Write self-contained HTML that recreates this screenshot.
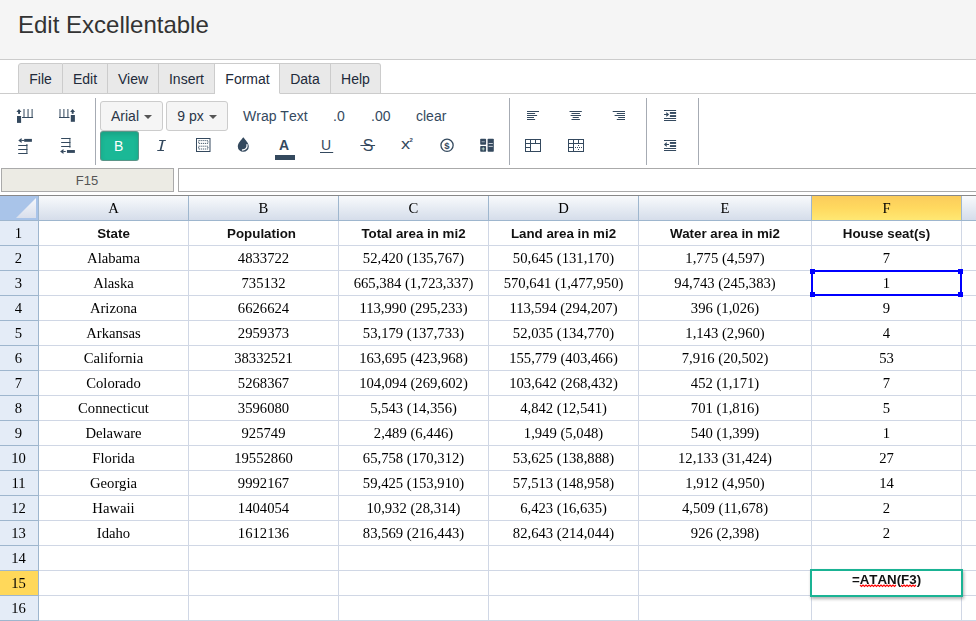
<!DOCTYPE html>
<html><head><meta charset="utf-8"><title>Edit Excellentable</title>
<style>
*{box-sizing:border-box;margin:0;padding:0}
html,body{width:976px;height:621px;overflow:hidden;background:#fff}
body{position:relative;font-family:"Liberation Sans",Arial,sans-serif;color:#333;font-size:14px}
#hdr{position:absolute;left:0;top:0;width:976px;height:60px;background:#f5f5f5;border-bottom:1px solid #ccc}
#hdr h1{position:absolute;left:18px;top:10px;font-size:24px;font-weight:normal;color:#333;line-height:30px;white-space:nowrap}
#tabs{position:absolute;left:18px;top:63px;height:31px;display:flex;z-index:2}
.tab{height:31px;border:1px solid #ccc;border-left:none;background:#e9e9e9;font-size:14px;line-height:31px;text-align:center;color:#222a3a}
.tab:first-child{border-left:1px solid #ccc;border-top-left-radius:3px}
.tab:last-child{border-top-right-radius:3px}
.tab.act{background:#fff;border-bottom-color:#fff}
#tabline{position:absolute;left:0;top:93px;width:976px;height:1px;background:#ccc}
#tbbot{position:absolute;left:0;top:168px;width:976px;height:1px;background:#aaa}
.vsep{position:absolute;top:98px;width:1px;height:67px;background:#a6abb3}
.btn{position:absolute;height:30px;border:1px solid #ccc;border-radius:3px;background:#f5f5f5;font-size:14px;line-height:28px;text-align:center;color:#2a3547}
.caret{display:inline-block;width:0;height:0;border-left:4px solid transparent;border-right:4px solid transparent;border-top:4px solid #555;vertical-align:middle;margin-left:5px;margin-top:0px;position:relative;top:-0.5px}
.tt{position:absolute;font-size:14px;line-height:16px;color:#34495e;white-space:nowrap;font-kerning:none}
.it{position:absolute;text-align:center;line-height:18px;color:#34495e;white-space:nowrap}
#bbtn{position:absolute;left:100px;top:131px;width:39px;height:30px;padding-right:1.5px;background:#1bb896;border:1px solid rgba(140,120,125,.55);box-shadow:inset 0 3px 5px rgba(0,0,0,.11);border-radius:3px;color:#fff;font-size:14px;line-height:28px;text-align:center}
#namebox{position:absolute;left:1px;top:168px;width:173px;height:24px;background:#ecebe4;border:1px solid #aaa;font-size:13px;line-height:23px;text-align:center;color:#555;padding-right:1px}
#fx{position:absolute;left:178px;top:168px;width:810px;height:24px;background:#fff;border:1px solid #aaa}
#gridtop{position:absolute;left:0;top:195px;width:976px;height:1px;background:#888}
#grid{position:absolute;left:0;top:0;width:976px;height:621px;font-family:"Liberation Serif","Times New Roman",serif;font-size:11pt;color:#000;will-change:transform}
.corner{position:absolute;left:0;top:196px;width:39px;height:25px;background:#a9c4e9;border-right:1px solid #9eb6ce;border-bottom:1px solid #9eb6ce}
.ch{position:absolute;top:196px;height:25px;background:linear-gradient(#f8fafc,#d5ddea);border-right:1px solid #9eb6ce;border-bottom:1px solid #9eb6ce;text-align:center;line-height:24px}
.ch.sel{background:linear-gradient(#fbcc5b,#ffd95f 50%,#ffe873)}
.rh{position:absolute;left:0;width:39px;padding-right:1px;height:25px;background:#e4ecf7;border-right:1px solid #9eb6ce;border-bottom:1px solid #9eb6ce;text-align:center;line-height:24px}
.rh.sel{background:#ffd85a}
.c{position:absolute;height:25px;border-right:1px solid #d0d7e5;border-bottom:1px solid #d0d7e5;text-align:center;line-height:25px;white-space:nowrap;overflow:hidden}
.c.b{font-family:"Liberation Sans",Arial,sans-serif;font-weight:bold;font-size:10pt;color:#111}
#selbox{position:absolute;left:811px;top:270px;width:151px;height:26px;border:2px solid #0000ff}
.h{position:absolute;width:5px;height:5px;background:#0000ff}
#editor{position:absolute;left:810px;top:569px;width:153px;height:28px;border:2px solid #1ab394;background:#fff;box-shadow:1px 2px 3px rgba(0,0,0,.3);font-family:"Liberation Sans",Arial,sans-serif;font-weight:bold;font-size:10pt;font-kerning:none;text-align:center;line-height:17px;color:#111}
</style></head><body>
<div id="hdr"><h1>Edit Excellentable</h1></div>
<div id="tabs">
<div class="tab" style="width:45px">File</div><div class="tab" style="width:45px">Edit</div><div class="tab" style="width:51px">View</div><div class="tab" style="width:56px">Insert</div><div class="tab act" style="width:65px;padding-left:1px">Format</div><div class="tab" style="width:51px">Data</div><div class="tab" style="width:50px">Help</div>
</div>
<div id="tabline"></div>
<div class="vsep" style="left:95px"></div>
<div class="vsep" style="left:509px"></div>
<div class="vsep" style="left:646px"></div>
<div class="vsep" style="left:698px"></div>
<div class="btn" style="left:100px;top:101px;width:63px">Arial<span class="caret"></span></div>
<div class="btn" style="left:166px;top:101px;width:62px">9 px<span class="caret"></span></div>
<div class="tt" style="left:243px;top:108px">Wrap Text</div>
<div class="tt" style="left:333px;top:108px">.0</div>
<div class="tt" style="left:371px;top:108px">.00</div>
<div class="tt" style="left:416px;top:108px">clear</div>
<div id="bbtn">B</div>
<svg width="976" height="621" style="position:absolute;left:0;top:0;pointer-events:none"><polygon points="18.96,108.90 16.40,112.00 21.50,112.00" fill="#34495e"/><rect x="18.10" y="111.80" width="1.90" height="2.10" fill="#34495e"/><rect x="17.00" y="116.00" width="4.10" height="6.90" fill="#34495e"/><rect x="23.50" y="109.00" width="1.00" height="8.50" fill="#34495e"/><rect x="27.55" y="109.00" width="1.00" height="8.50" fill="#34495e"/><rect x="31.60" y="109.00" width="1.00" height="8.50" fill="#34495e"/><rect x="22.05" y="117.00" width="11.02" height="1.00" fill="#34495e"/><rect x="59.50" y="109.00" width="1.00" height="8.50" fill="#34495e"/><rect x="63.40" y="109.00" width="1.00" height="8.50" fill="#34495e"/><rect x="67.40" y="109.00" width="1.00" height="8.50" fill="#34495e"/><rect x="59.00" y="117.00" width="10.50" height="1.00" fill="#34495e"/><polygon points="72.60,108.90 70.10,112.00 75.10,112.00" fill="#34495e"/><rect x="71.70" y="111.80" width="1.90" height="2.00" fill="#34495e"/><rect x="70.80" y="115.00" width="4.10" height="6.80" fill="#34495e"/><polygon points="18.30,140.45 21.60,138.00 21.60,142.90" fill="#34495e"/><rect x="21.30" y="139.95" width="3.20" height="1.00" fill="#34495e"/><rect x="24.20" y="138.90" width="7.70" height="2.90" fill="#34495e"/><rect x="18.20" y="145.00" width="9.20" height="1.00" fill="#34495e"/><rect x="18.20" y="149.00" width="9.20" height="1.00" fill="#34495e"/><rect x="18.20" y="153.00" width="9.20" height="1.00" fill="#34495e"/><rect x="26.40" y="144.05" width="1.00" height="9.95" fill="#34495e"/><rect x="61.15" y="138.00" width="9.25" height="1.00" fill="#34495e"/><rect x="61.15" y="142.00" width="9.25" height="1.00" fill="#34495e"/><rect x="61.15" y="146.00" width="9.25" height="1.00" fill="#34495e"/><rect x="69.40" y="137.90" width="1.00" height="9.80" fill="#34495e"/><polygon points="60.10,151.50 63.50,149.00 63.50,154.00" fill="#34495e"/><rect x="63.30" y="151.00" width="2.40" height="1.00" fill="#34495e"/><rect x="66.95" y="150.04" width="7.95" height="2.86" fill="#34495e"/><polygon points="159.20,140.00 165.90,140.00 165.80,141.00 159.10,141.00" fill="#34495e"/><polygon points="157.30,150.00 164.00,150.00 163.90,151.00 157.20,151.00" fill="#34495e"/><polygon points="162.00,140.50 163.70,140.50 161.30,150.50 159.60,150.50" fill="#34495e"/><rect x="196.5" y="138.5" width="13.5" height="13" fill="none" stroke="#34495e" stroke-width="1"/><rect x="198.6" y="140.6" width="9.3" height="2.8" fill="none" stroke="#34495e" stroke-width="0.9" stroke-dasharray="1.2 0.8"/><rect x="198.6" y="146.2" width="9.3" height="2.8" fill="none" stroke="#34495e" stroke-width="0.9" stroke-dasharray="1.2 0.8"/><path d="M243.3,137.3 C245.5,140.2 248.8,143.2 248.8,146.4 A5.5,5.4 0 0 1 237.8,146.4 C237.8,143.2 241.10000000000002,140.2 243.3,137.3 Z" fill="#34495e"/><path d="M247.0,144.6 C247.5,147.6 245.70000000000002,149.9 242.5,150.0" fill="none" stroke="#fff" stroke-width="1.3" stroke-linecap="round"/><rect x="275.00" y="155.00" width="20.00" height="5.00" fill="#34495e"/><rect x="320.00" y="152.00" width="13.20" height="1.00" fill="#34495e"/><rect x="360.40" y="145.00" width="14.70" height="1.00" fill="#34495e"/><circle cx="447.05" cy="145.3" r="6.1" fill="none" stroke="#34495e" stroke-width="1.3"/><rect x="480.2" y="138.8" width="5.9" height="6.0" rx="0.8" fill="#34495e"/><rect x="480.2" y="146.0" width="5.9" height="5.8" rx="0.8" fill="#34495e"/><rect x="487.6" y="138.8" width="6.2" height="13.0" rx="0.8" fill="#34495e"/><rect x="481.60" y="141.40" width="3.20" height="0.80" fill="#b9c2cc"/><rect x="481.60" y="148.50" width="3.20" height="0.80" fill="#c9e6d4"/><rect x="482.80" y="147.30" width="0.80" height="3.20" fill="#c9e6d4"/><rect x="488.60" y="143.00" width="4.20" height="0.80" fill="#e8ecf0"/><rect x="488.60" y="145.90" width="4.20" height="0.80" fill="#e8ecf0"/><rect x="527.00" y="111.00" width="12.00" height="1.00" fill="#34495e"/><rect x="527.00" y="113.00" width="8.10" height="1.00" fill="#34495e"/><rect x="527.00" y="115.00" width="10.10" height="1.00" fill="#34495e"/><rect x="527.00" y="117.00" width="7.00" height="1.00" fill="#34495e"/><rect x="527.00" y="119.00" width="8.10" height="1.00" fill="#34495e"/><rect x="569.50" y="111.00" width="12.30" height="1.00" fill="#34495e"/><rect x="571.50" y="113.00" width="8.40" height="1.00" fill="#34495e"/><rect x="570.60" y="115.00" width="10.40" height="1.00" fill="#34495e"/><rect x="572.70" y="117.00" width="6.10" height="1.00" fill="#34495e"/><rect x="571.50" y="119.00" width="8.40" height="1.00" fill="#34495e"/><rect x="612.70" y="111.00" width="12.30" height="1.00" fill="#34495e"/><rect x="616.80" y="113.00" width="8.20" height="1.00" fill="#34495e"/><rect x="614.60" y="115.00" width="10.40" height="1.00" fill="#34495e"/><rect x="618.20" y="117.00" width="6.80" height="1.00" fill="#34495e"/><rect x="616.80" y="119.00" width="8.20" height="1.00" fill="#34495e"/><rect x="525.5" y="139.5" width="15" height="12" fill="none" stroke="#34495e" stroke-width="1"/><rect x="530.00" y="139.50" width="1.00" height="12.00" fill="#34495e"/><rect x="535.00" y="139.50" width="1.00" height="4.00" fill="#34495e"/><rect x="525.50" y="143.00" width="15.00" height="1.00" fill="#34495e"/><rect x="525.50" y="147.00" width="5.00" height="1.00" fill="#34495e"/><rect x="568.5" y="139.5" width="15" height="12" fill="none" stroke="#34495e" stroke-width="1"/><rect x="573.00" y="139.50" width="1.00" height="12.00" fill="#34495e"/><rect x="578.00" y="139.50" width="1.00" height="4.00" fill="#34495e"/><rect x="568.50" y="143.00" width="15.00" height="1.00" fill="#34495e"/><rect x="568.50" y="147.00" width="5.00" height="1.00" fill="#34495e"/><rect x="575.00" y="147.00" width="1.00" height="1.00" fill="#34495e"/><rect x="577.00" y="147.00" width="1.00" height="1.00" fill="#34495e"/><rect x="579.00" y="147.00" width="1.00" height="1.00" fill="#34495e"/><rect x="581.00" y="147.00" width="1.00" height="1.00" fill="#34495e"/><rect x="578.00" y="145.00" width="1.00" height="1.00" fill="#34495e"/><rect x="578.00" y="149.00" width="1.00" height="1.00" fill="#34495e"/><rect x="664.00" y="110.00" width="12.10" height="1.00" fill="#34495e"/><rect x="669.90" y="112.00" width="6.20" height="1.90" fill="#34495e"/><rect x="669.90" y="115.10" width="6.20" height="1.90" fill="#34495e"/><rect x="664.00" y="118.00" width="12.10" height="1.00" fill="#34495e"/><rect x="664.00" y="120.00" width="12.10" height="1.00" fill="#34495e"/><rect x="664.00" y="114.00" width="3.50" height="1.00" fill="#34495e"/><polygon points="669.10,114.50 666.30,112.10 666.30,116.90" fill="#34495e"/><rect x="664.00" y="140.00" width="12.10" height="1.00" fill="#34495e"/><rect x="669.90" y="142.00" width="6.20" height="1.90" fill="#34495e"/><rect x="669.90" y="145.10" width="6.20" height="1.90" fill="#34495e"/><rect x="664.00" y="148.00" width="12.10" height="1.00" fill="#34495e"/><rect x="664.00" y="150.00" width="12.10" height="1.00" fill="#34495e"/><rect x="665.50" y="144.00" width="3.50" height="1.00" fill="#34495e"/><polygon points="663.90,144.50 666.70,142.10 666.70,146.90" fill="#34495e"/></svg>
<div class="it" style="left:274px;top:135.5px;width:20px;font-weight:bold;font-size:14px">A</div>
<div class="it" style="left:316px;top:136px;width:20px;font-size:14px">U</div>
<div class="it" style="left:358px;top:137px;width:20px;font-size:16px">S</div>
<div class="it" style="left:396px;top:135px;width:10px;font-size:14px;text-align:left;padding-left:0;transform:translateX(5px) scaleX(1.3);transform-origin:0 0">x</div><div class="it" style="left:409.5px;top:130.5px;width:5px;font-size:6px;font-weight:bold;text-align:left">2</div>
<div class="it" style="left:437px;top:136.5px;width:20px;font-size:9.5px;font-weight:bold">$</div>

<div id="namebox">F15</div>
<div id="fx"></div>
<div id="gridtop"></div>
<div id="grid">
<div class="corner"><svg width="38" height="24" style="position:absolute;left:0;top:0"><defs><linearGradient id="cg" x1="0" y1="0" x2="0" y2="1"><stop offset="0" stop-color="#f4f7fb"/><stop offset="1" stop-color="#d9dfec"/></linearGradient></defs><polygon points="36,2 36,22 16,22" fill="url(#cg)"/></svg></div>
<div class="ch" style="left:39px;width:150px">A</div>
<div class="ch" style="left:189px;width:150px">B</div>
<div class="ch" style="left:339px;width:150px">C</div>
<div class="ch" style="left:489px;width:150px">D</div>
<div class="ch" style="left:639px;width:173px">E</div>
<div class="ch sel" style="left:812px;width:150px">F</div>
<div class="ch" style="left:962px;width:150px">G</div>
<div class="rh" style="top:221px">1</div>
<div class="c b" style="left:39px;top:221px;width:150px">State</div>
<div class="c b" style="left:189px;top:221px;width:150px;padding-right:4px">Population</div>
<div class="c b" style="left:339px;top:221px;width:150px">Total area in mi2</div>
<div class="c b" style="left:489px;top:221px;width:150px">Land area in mi2</div>
<div class="c b" style="left:639px;top:221px;width:173px">Water area in mi2</div>
<div class="c b" style="left:812px;top:221px;width:150px">House seat(s)</div>
<div class="c b" style="left:962px;top:221px;width:150px"></div>
<div class="rh" style="top:246px">2</div>
<div class="c" style="left:39px;top:246px;width:150px">Alabama</div>
<div class="c" style="left:189px;top:246px;width:150px">4833722</div>
<div class="c" style="left:339px;top:246px;width:150px">52,420 (135,767)</div>
<div class="c" style="left:489px;top:246px;width:150px">50,645 (131,170)</div>
<div class="c" style="left:639px;top:246px;width:173px">1,775 (4,597)</div>
<div class="c" style="left:812px;top:246px;width:150px">7</div>
<div class="c" style="left:962px;top:246px;width:150px"></div>
<div class="rh" style="top:271px">3</div>
<div class="c" style="left:39px;top:271px;width:150px">Alaska</div>
<div class="c" style="left:189px;top:271px;width:150px">735132</div>
<div class="c" style="left:339px;top:271px;width:150px">665,384 (1,723,337)</div>
<div class="c" style="left:489px;top:271px;width:150px">570,641 (1,477,950)</div>
<div class="c" style="left:639px;top:271px;width:173px">94,743 (245,383)</div>
<div class="c" style="left:812px;top:271px;width:150px">1</div>
<div class="c" style="left:962px;top:271px;width:150px"></div>
<div class="rh" style="top:296px">4</div>
<div class="c" style="left:39px;top:296px;width:150px">Arizona</div>
<div class="c" style="left:189px;top:296px;width:150px">6626624</div>
<div class="c" style="left:339px;top:296px;width:150px">113,990 (295,233)</div>
<div class="c" style="left:489px;top:296px;width:150px">113,594 (294,207)</div>
<div class="c" style="left:639px;top:296px;width:173px">396 (1,026)</div>
<div class="c" style="left:812px;top:296px;width:150px">9</div>
<div class="c" style="left:962px;top:296px;width:150px"></div>
<div class="rh" style="top:321px">5</div>
<div class="c" style="left:39px;top:321px;width:150px">Arkansas</div>
<div class="c" style="left:189px;top:321px;width:150px">2959373</div>
<div class="c" style="left:339px;top:321px;width:150px">53,179 (137,733)</div>
<div class="c" style="left:489px;top:321px;width:150px">52,035 (134,770)</div>
<div class="c" style="left:639px;top:321px;width:173px">1,143 (2,960)</div>
<div class="c" style="left:812px;top:321px;width:150px">4</div>
<div class="c" style="left:962px;top:321px;width:150px"></div>
<div class="rh" style="top:346px">6</div>
<div class="c" style="left:39px;top:346px;width:150px">California</div>
<div class="c" style="left:189px;top:346px;width:150px">38332521</div>
<div class="c" style="left:339px;top:346px;width:150px">163,695 (423,968)</div>
<div class="c" style="left:489px;top:346px;width:150px">155,779 (403,466)</div>
<div class="c" style="left:639px;top:346px;width:173px">7,916 (20,502)</div>
<div class="c" style="left:812px;top:346px;width:150px">53</div>
<div class="c" style="left:962px;top:346px;width:150px"></div>
<div class="rh" style="top:371px">7</div>
<div class="c" style="left:39px;top:371px;width:150px">Colorado</div>
<div class="c" style="left:189px;top:371px;width:150px">5268367</div>
<div class="c" style="left:339px;top:371px;width:150px">104,094 (269,602)</div>
<div class="c" style="left:489px;top:371px;width:150px">103,642 (268,432)</div>
<div class="c" style="left:639px;top:371px;width:173px">452 (1,171)</div>
<div class="c" style="left:812px;top:371px;width:150px">7</div>
<div class="c" style="left:962px;top:371px;width:150px"></div>
<div class="rh" style="top:396px">8</div>
<div class="c" style="left:39px;top:396px;width:150px">Connecticut</div>
<div class="c" style="left:189px;top:396px;width:150px">3596080</div>
<div class="c" style="left:339px;top:396px;width:150px">5,543 (14,356)</div>
<div class="c" style="left:489px;top:396px;width:150px">4,842 (12,541)</div>
<div class="c" style="left:639px;top:396px;width:173px">701 (1,816)</div>
<div class="c" style="left:812px;top:396px;width:150px">5</div>
<div class="c" style="left:962px;top:396px;width:150px"></div>
<div class="rh" style="top:421px">9</div>
<div class="c" style="left:39px;top:421px;width:150px">Delaware</div>
<div class="c" style="left:189px;top:421px;width:150px">925749</div>
<div class="c" style="left:339px;top:421px;width:150px">2,489 (6,446)</div>
<div class="c" style="left:489px;top:421px;width:150px">1,949 (5,048)</div>
<div class="c" style="left:639px;top:421px;width:173px">540 (1,399)</div>
<div class="c" style="left:812px;top:421px;width:150px">1</div>
<div class="c" style="left:962px;top:421px;width:150px"></div>
<div class="rh" style="top:446px">10</div>
<div class="c" style="left:39px;top:446px;width:150px">Florida</div>
<div class="c" style="left:189px;top:446px;width:150px">19552860</div>
<div class="c" style="left:339px;top:446px;width:150px">65,758 (170,312)</div>
<div class="c" style="left:489px;top:446px;width:150px">53,625 (138,888)</div>
<div class="c" style="left:639px;top:446px;width:173px">12,133 (31,424)</div>
<div class="c" style="left:812px;top:446px;width:150px">27</div>
<div class="c" style="left:962px;top:446px;width:150px"></div>
<div class="rh" style="top:471px">11</div>
<div class="c" style="left:39px;top:471px;width:150px">Georgia</div>
<div class="c" style="left:189px;top:471px;width:150px">9992167</div>
<div class="c" style="left:339px;top:471px;width:150px">59,425 (153,910)</div>
<div class="c" style="left:489px;top:471px;width:150px">57,513 (148,958)</div>
<div class="c" style="left:639px;top:471px;width:173px">1,912 (4,950)</div>
<div class="c" style="left:812px;top:471px;width:150px">14</div>
<div class="c" style="left:962px;top:471px;width:150px"></div>
<div class="rh" style="top:496px">12</div>
<div class="c" style="left:39px;top:496px;width:150px">Hawaii</div>
<div class="c" style="left:189px;top:496px;width:150px">1404054</div>
<div class="c" style="left:339px;top:496px;width:150px">10,932 (28,314)</div>
<div class="c" style="left:489px;top:496px;width:150px">6,423 (16,635)</div>
<div class="c" style="left:639px;top:496px;width:173px">4,509 (11,678)</div>
<div class="c" style="left:812px;top:496px;width:150px">2</div>
<div class="c" style="left:962px;top:496px;width:150px"></div>
<div class="rh" style="top:521px">13</div>
<div class="c" style="left:39px;top:521px;width:150px">Idaho</div>
<div class="c" style="left:189px;top:521px;width:150px">1612136</div>
<div class="c" style="left:339px;top:521px;width:150px">83,569 (216,443)</div>
<div class="c" style="left:489px;top:521px;width:150px">82,643 (214,044)</div>
<div class="c" style="left:639px;top:521px;width:173px">926 (2,398)</div>
<div class="c" style="left:812px;top:521px;width:150px">2</div>
<div class="c" style="left:962px;top:521px;width:150px"></div>
<div class="rh" style="top:546px">14</div>
<div class="c" style="left:39px;top:546px;width:150px"></div>
<div class="c" style="left:189px;top:546px;width:150px"></div>
<div class="c" style="left:339px;top:546px;width:150px"></div>
<div class="c" style="left:489px;top:546px;width:150px"></div>
<div class="c" style="left:639px;top:546px;width:173px"></div>
<div class="c" style="left:812px;top:546px;width:150px"></div>
<div class="c" style="left:962px;top:546px;width:150px"></div>
<div class="rh sel" style="top:571px">15</div>
<div class="c" style="left:39px;top:571px;width:150px"></div>
<div class="c" style="left:189px;top:571px;width:150px"></div>
<div class="c" style="left:339px;top:571px;width:150px"></div>
<div class="c" style="left:489px;top:571px;width:150px"></div>
<div class="c" style="left:639px;top:571px;width:173px"></div>
<div class="c" style="left:812px;top:571px;width:150px"></div>
<div class="c" style="left:962px;top:571px;width:150px"></div>
<div class="rh" style="top:596px">16</div>
<div class="c" style="left:39px;top:596px;width:150px"></div>
<div class="c" style="left:189px;top:596px;width:150px"></div>
<div class="c" style="left:339px;top:596px;width:150px"></div>
<div class="c" style="left:489px;top:596px;width:150px"></div>
<div class="c" style="left:639px;top:596px;width:173px"></div>
<div class="c" style="left:812px;top:596px;width:150px"></div>
<div class="c" style="left:962px;top:596px;width:150px"></div>
<div id="selbox"></div><div class="h" style="left:810px;top:269px"></div><div class="h" style="left:958px;top:269px"></div><div class="h" style="left:810px;top:292px"></div><div class="h" style="left:958px;top:292px"></div>

</div>
<div id="editor">=ATAN(F3)</div><svg width="976" height="621" style="position:absolute;left:0;top:0;pointer-events:none"><polyline points="860,585 861.5,586.5 863.0,585 864.5,586.5 866.0,585 867.5,586.5 869.0,585 870.5,586.5 872.0,585 873.5,586.5 875.0,585 876.5,586.5 878.0,585 879.5,586.5 881.0,585 882.5,586.5 884.0,585 885.5,586.5 887.0,585 888.5,586.5 890.0,585 891.5,586.5 893.0,585 894.5,586.5 896.0,585" fill="none" stroke="#f00" stroke-width="1.2"/><polyline points="901,585 902.5,586.5 904.0,585 905.5,586.5 907.0,585 908.5,586.5 910.0,585 911.5,586.5 913.0,585 914.5,586.5 916.0,585" fill="none" stroke="#f00" stroke-width="1.2"/></svg>
</body></html>
